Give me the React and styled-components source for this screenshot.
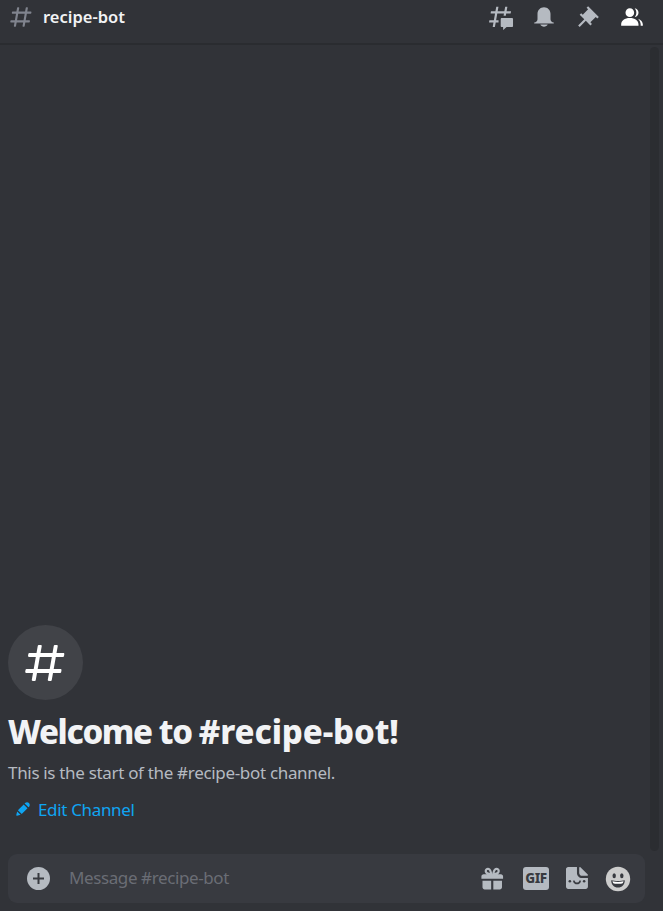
import React from "react";
import styled, { createGlobalStyle } from "styled-components";

const GlobalStyle = createGlobalStyle`
  * { box-sizing: border-box; }
  html, body { margin: 0; padding: 0; background: #313338; overflow: hidden; }
  body { font-family: "Noto Sans", "Open Sans", sans-serif; }
`;

const Page = styled.div`
  display: flex;
  flex-direction: column;
  width: 663px;
  height: 911px;
  background: #313338;
`;

const Header = styled.header`
  display: flex;
  align-items: center;
  flex: none;
  height: 45px;
  padding: 0 18px 9px 8px;
  border-bottom: 2px solid #2a2c30;
`;

const Title = styled.h1`
  flex: 1;
  margin: 0 0 0 9px;
  font-size: 16.5px;
  line-height: 22px;
  font-weight: 600;
  letter-spacing: 0;
  color: #f2f3f5;
`;

const Toolbar = styled.div`
  display: flex;
  gap: 18px;
`;

const Icon = styled.svg`
  display: block;
  flex: none;
  width: ${(p) => p.$size || 26}px;
  height: ${(p) => p.$size || 26}px;
  margin-bottom: ${(p) => p.$lift || 0}px;
  color: ${(p) => p.$color || "#b5bac1"};
`;

const Body = styled.main`
  display: flex;
  flex: 1;
  min-height: 0;
  padding: 2px 4px 0 8px;
`;

const Messages = styled.section`
  display: flex;
  flex: 1;
  flex-direction: column;
  justify-content: flex-end;
  align-items: flex-start;
  padding-bottom: 30px;
`;

const ScrollTrack = styled.div`
  width: 9px;
  height: 804px;
  border-radius: 5px;
  background: #2b2d31;
`;

const ChannelBadge = styled.div`
  display: flex;
  align-items: center;
  justify-content: center;
  width: 75px;
  height: 75px;
  padding-right: 2px;
  border-radius: 50%;
  background: #414348;
`;

const Welcome = styled.h2`
  margin: 10px 0 0;
  font-size: 33px;
  line-height: 44px;
  font-weight: 800;
  letter-spacing: -1.38px;
  white-space: nowrap;
  color: #f2f3f5;
`;

const ChannelName = styled.span`
  letter-spacing: -0.12px;
`;

const Intro = styled.p`
  margin: 8px 0 0;
  font-size: 17px;
  line-height: 22px;
  letter-spacing: -0.32px;
  white-space: nowrap;
  color: #b5bac1;
`;

const EditButton = styled.button`
  display: flex;
  align-items: center;
  gap: 6px;
  margin: 15px 0 0;
  padding: 0 0 0 6px;
  border: 0;
  background: none;
  font: 400 17px/22px "Noto Sans", "Open Sans", sans-serif;
  letter-spacing: -0.34px;
  color: #0fa5f2;
`;

const Composer = styled.footer`
  display: flex;
  align-items: center;
  flex: none;
  height: 49px;
  margin: 3px 18px 8px 8px;
  padding: 0 14px 0 18px;
  border-radius: 9px;
  background: #383a40;
`;

const Placeholder = styled.div`
  flex: 1;
  margin-left: 17px;
  padding-bottom: 2px;
  font-size: 17px;
  line-height: 22px;
  letter-spacing: -0.4px;
  color: #6a6d75;
`;

const ComposerTools = styled.div`
  display: flex;
  align-items: center;
  gap: 17px;
`;

const GifBadge = styled.span`
  display: flex;
  align-items: center;
  justify-content: center;
  width: 26px;
  height: 23px;
  border-radius: 3px;
  background: #b5bac1;
  color: #383a40;
  font-size: 13.5px;
  line-height: 23px;
  font-weight: 800;
  letter-spacing: -0.4px;
`;

const HASH =
  "M5.88657 21C5.57547 21 5.3399 20.7189 5.39427 20.4126L6 17H2.59511C2.28449 17 2.04905 16.7198 2.10259 16.4138L2.27759 15.4138C2.31946 15.1746 2.52722 15 2.77011 15H6.35L7.41 9H4.00511C3.69449 9 3.45905 8.71977 3.51259 8.41381L3.68759 7.41381C3.72946 7.17456 3.93722 7 4.18011 7H7.76L8.39677 3.41262C8.43914 3.17391 8.64664 3 8.88907 3H9.87344C10.1845 3 10.4201 3.28107 10.3657 3.58738L9.76 7H15.76L16.3968 3.41262C16.4391 3.17391 16.6466 3 16.8891 3H17.8734C18.1845 3 18.4201 3.28107 18.3657 3.58738L17.76 7H21.1649C21.4755 7 21.711 7.28023 21.6574 7.58619L21.4824 8.58619C21.4406 8.82544 21.2328 9 20.9899 9H17.41L16.35 15H19.7549C20.0655 15 20.301 15.2802 20.2474 15.5862L20.0724 16.5862C20.0306 16.8254 19.8228 17 19.5799 17H16L15.3632 20.5874C15.3209 20.8261 15.1134 21 14.8709 21H13.8866C13.5755 21 13.3399 20.7189 13.3943 20.4126L14 17H8L7.36325 20.5874C7.32088 20.8261 7.11337 21 6.87094 21H5.88657ZM9.41045 9L8.35045 15H14.3504L15.4104 9H9.41045Z";

const HashIcon = (props) => (
  <Icon viewBox="0 0 24 24" {...props}>
    <path fill="currentColor" fillRule="evenodd" d={HASH} />
  </Icon>
);

const ThreadsIcon = () => (
  <Icon viewBox="0.2 0.5 23.3 23.3" overflow="visible">
    <path
      fill="currentColor"
      d="M5.43309 21C5.35842 21 5.30189 20.9325 5.31494 20.859L6 17H2.14274C2.06819 17 2.01168 16.9327 2.02453 16.8593L2.33253 15.0993C2.34258 15.0419 2.39244 15 2.45074 15H6.35L7.41 9H3.55274C3.47819 9 3.42168 8.93274 3.43453 8.85931L3.74253 7.09931C3.75258 7.04189 3.80244 7 3.86074 7H7.76L8.45234 3.09903C8.46251 3.04174 8.51231 3 8.57049 3H10.3267C10.4014 3 10.4579 3.06746 10.4449 3.14097L9.76 7H15.76L16.4523 3.09903C16.4625 3.04174 16.5123 3 16.5705 3H18.3267C18.4014 3 18.4579 3.06746 18.4449 3.14097L17.76 7H21.6171C21.6916 7 21.7481 7.06725 21.7353 7.14069L21.4273 8.90069C21.4172 8.95811 21.3674 9 21.3091 9H17.41L17.0495 11.04H15.05L15.4104 9H9.41035L8.35035 15H10.56V17H8L7.30749 20.901C7.29732 20.9583 7.24752 21 7.18934 21H5.43309Z"
    />
    <path
      fill="currentColor"
      d="M13.44 12.96C12.9097 12.96 12.48 13.3898 12.48 13.92V20.2213C12.48 20.7515 12.9097 21.1813 13.44 21.1813H14.4C14.5325 21.1813 14.64 21.2887 14.64 21.4213V23.4597C14.64 23.6677 14.8865 23.7773 15.0408 23.6378L17.4858 21.4289C17.6622 21.2695 17.8916 21.1813 18.1294 21.1813H22.56C23.0901 21.1813 23.52 20.7515 23.52 20.2213V13.92C23.52 13.3898 23.0901 12.96 22.56 12.96H13.44Z"
    />
  </Icon>
);

const BellIcon = () => (
  <Icon viewBox="0 0 24 24">
    <path
      fill="currentColor"
      d="M18 9V14C18 15.657 19.344 17 21 17V18H3V17C4.656 17 6 15.657 6 14V9C6 5.686 8.686 3 12 3C15.314 3 18 5.686 18 9ZM12 21C10.5239 21 9.24793 20.19 8.55493 19H15.4449C14.7519 20.19 13.4759 21 12 21Z"
    />
  </Icon>
);

const PinIcon = () => (
  <Icon viewBox="0 0 24 24">
    <path
      fill="currentColor"
      d="M22 12L12.101 2.101L10.686 3.514L12.101 4.929L7.151 9.879L5.736 8.465L4.322 9.88L8.565 14.122L2.908 19.778L4.322 21.192L9.979 15.536L14.222 19.778L15.636 18.364L14.222 16.95L19.171 12L20.586 13.414L22 12Z"
    />
  </Icon>
);

const MembersIcon = () => (
  <Icon viewBox="0 0 24 24" $color="#ffffff">
    <path
      fill="currentColor"
      d="M14 8.006C14 10.211 12.206 12.006 10 12.006C7.795 12.006 6 10.211 6 8.006C6 5.801 7.794 4.006 10 4.006C12.206 4.006 14 5.801 14 8.006ZM2 19.006C2 15.473 5.29 13.006 10 13.006C14.711 13.006 18 15.473 18 19.006V20.006H2V19.006ZM20 20.006H22V19.006C22 16.4433 20.2697 14.4415 17.5213 13.5352C19.0621 14.9127 20 16.8059 20 19.006V20.006ZM14.8834 11.9077C16.6657 11.5044 18 9.9077 18 8.006C18 5.96916 16.4693 4.28218 14.4971 4.0367C15.4322 5.09511 16 6.48524 16 8.006C16 9.44888 15.4889 10.7742 14.6378 11.8102L14.8834 11.9077Z"
    />
  </Icon>
);

const PencilIcon = () => (
  <Icon viewBox="0 0 24 24" $size={18} $lift={2} $color="#0fa5f2">
    <path
      fill="currentColor"
      d="M19.2929 9.8299L19.9409 9.18278C21.353 7.77064 21.353 5.47197 19.9409 4.05892C18.5287 2.64678 16.2292 2.64678 14.817 4.05892L14.1699 4.70694L19.2929 9.8299ZM12.8962 5.97688L5.18469 13.6906L10.3085 18.813L18.0201 11.0992L12.8962 5.97688ZM4.11851 20.9704L8.75906 19.8112L4.18692 15.239L3.02678 19.8796C2.95028 20.1856 3.04028 20.5105 3.26349 20.7337C3.48669 20.9569 3.8116 21.046 4.11851 20.9704Z"
    />
  </Icon>
);

const PlusIcon = () => (
  <Icon viewBox="0 0 26 26">
    <circle cx="12.5" cy="12.5" r="11.5" fill="currentColor" />
    <path d="M12.5 7V18M7 12.5H18" stroke="#383a40" strokeWidth="2" />
  </Icon>
);

const GiftIcon = () => (
  <Icon viewBox="0.7 0.3 24 24">
    <path
      fill="currentColor"
      fillRule="evenodd"
      d="M16.886 8H20C21.104 8 22 8.896 22 10V12H2V10C2 8.896 2.897 8 4 8H7.114C6.663 7.764 6.236 7.477 5.879 7.121C4.709 5.951 4.709 4.048 5.879 2.879C7.012 1.746 8.986 1.746 10.121 2.877C11.758 4.514 11.979 7.595 12 7.941C12.022 7.595 12.243 4.514 13.88 2.877C15.014 1.745 16.988 1.746 18.121 2.879C19.29 4.049 19.29 5.952 18.121 7.121C17.764 7.477 17.337 7.764 16.886 8ZM7.293 5.707C6.903 5.316 6.903 4.682 7.293 4.292C7.481 4.103 7.732 4 8 4C8.268 4 8.519 4.103 8.707 4.292C9.297 4.882 9.641 5.94 9.825 6.822C8.945 6.639 7.879 6.293 7.293 5.707ZM14.174 6.824C14.359 5.941 14.702 4.883 15.293 4.293C15.481 4.103 15.732 4 16 4C16.268 4 16.519 4.103 16.706 4.291C17.096 4.682 17.097 5.316 16.707 5.707C16.116 6.298 15.057 6.642 14.174 6.824ZM3 14V20C3 21.102 3.897 22 5 22H11V14H3ZM13 14V22H19C20.104 22 21 21.102 21 20V14H13Z"
    />
  </Icon>
);

const StickerIcon = () => (
  <Icon viewBox="0 0 20 20" $size={22} $lift={1}>
    <path
      fill="currentColor"
      d="M12 0.663V5.402C12 6.84 13.16 8 14.599 8H19.339C19.925 8 20.222 7.296 19.806 6.879L13.121 0.197C12.704 -0.22 12 0.068 12 0.663ZM14.576 10.028C12.034 10.028 9.97 7.964 9.97 5.422V0.058H1.994C0.897 0.058 0 0.956 0 2.052V18.004C0 19.101 0.897 19.998 1.994 19.998H17.946C19.042 19.998 19.94 19.101 19.94 18.004V10.028H14.576Z"
    />
    <circle cx="3.5" cy="13" r="1.15" fill="#383a40" />
    <circle cx="16.5" cy="13" r="1.15" fill="#383a40" />
    <path d="M7.2 12.9C8 15.6 12 15.6 12.8 12.9" fill="none" stroke="#383a40" strokeWidth="1.5" strokeLinecap="round" />
  </Icon>
);

const EmojiIcon = () => (
  <Icon viewBox="0 0 26 26" $color="#cccccc">
    <circle cx="13" cy="13" r="12.2" fill="currentColor" />
    <ellipse cx="9.2" cy="9.7" rx="1.7" ry="2.5" fill="#383a40" />
    <ellipse cx="16.8" cy="9.7" rx="1.7" ry="2.5" fill="#383a40" />
    <path d="M6.2 14.2C10 15.2 16 15.2 19.8 14.2C19.8 18.4 17 21.6 13 21.6C9 21.6 6.2 18.4 6.2 14.2Z" fill="#383a40" />
    <path d="M7.5 15.3C11 16.1 15 16.1 18.5 15.3C18.3 17 17.4 17.8 16 17.8H10C8.6 17.8 7.7 17 7.5 15.3Z" fill="#ffffff" />
  </Icon>
);

export default function App() {
  return (
    <Page>
      <GlobalStyle />
      <Header>
        <HashIcon $color="#80848e" />
        <Title>recipe-bot</Title>
        <Toolbar>
          <ThreadsIcon />
          <BellIcon />
          <PinIcon />
          <MembersIcon />
        </Toolbar>
      </Header>
      <Body>
        <Messages>
          <ChannelBadge>
            <HashIcon $color="#ffffff" $size={48} />
          </ChannelBadge>
          <Welcome>
            Welcome to <ChannelName>#recipe-bot!</ChannelName>
          </Welcome>
          <Intro>This is the start of the #recipe-bot channel.</Intro>
          <EditButton>
            <PencilIcon />
            Edit Channel
          </EditButton>
        </Messages>
        <ScrollTrack />
      </Body>
      <Composer>
        <PlusIcon />
        <Placeholder>Message #recipe-bot</Placeholder>
        <ComposerTools>
          <GiftIcon />
          <GifBadge>GIF</GifBadge>
          <StickerIcon />
          <EmojiIcon />
        </ComposerTools>
      </Composer>
    </Page>
  );
}
